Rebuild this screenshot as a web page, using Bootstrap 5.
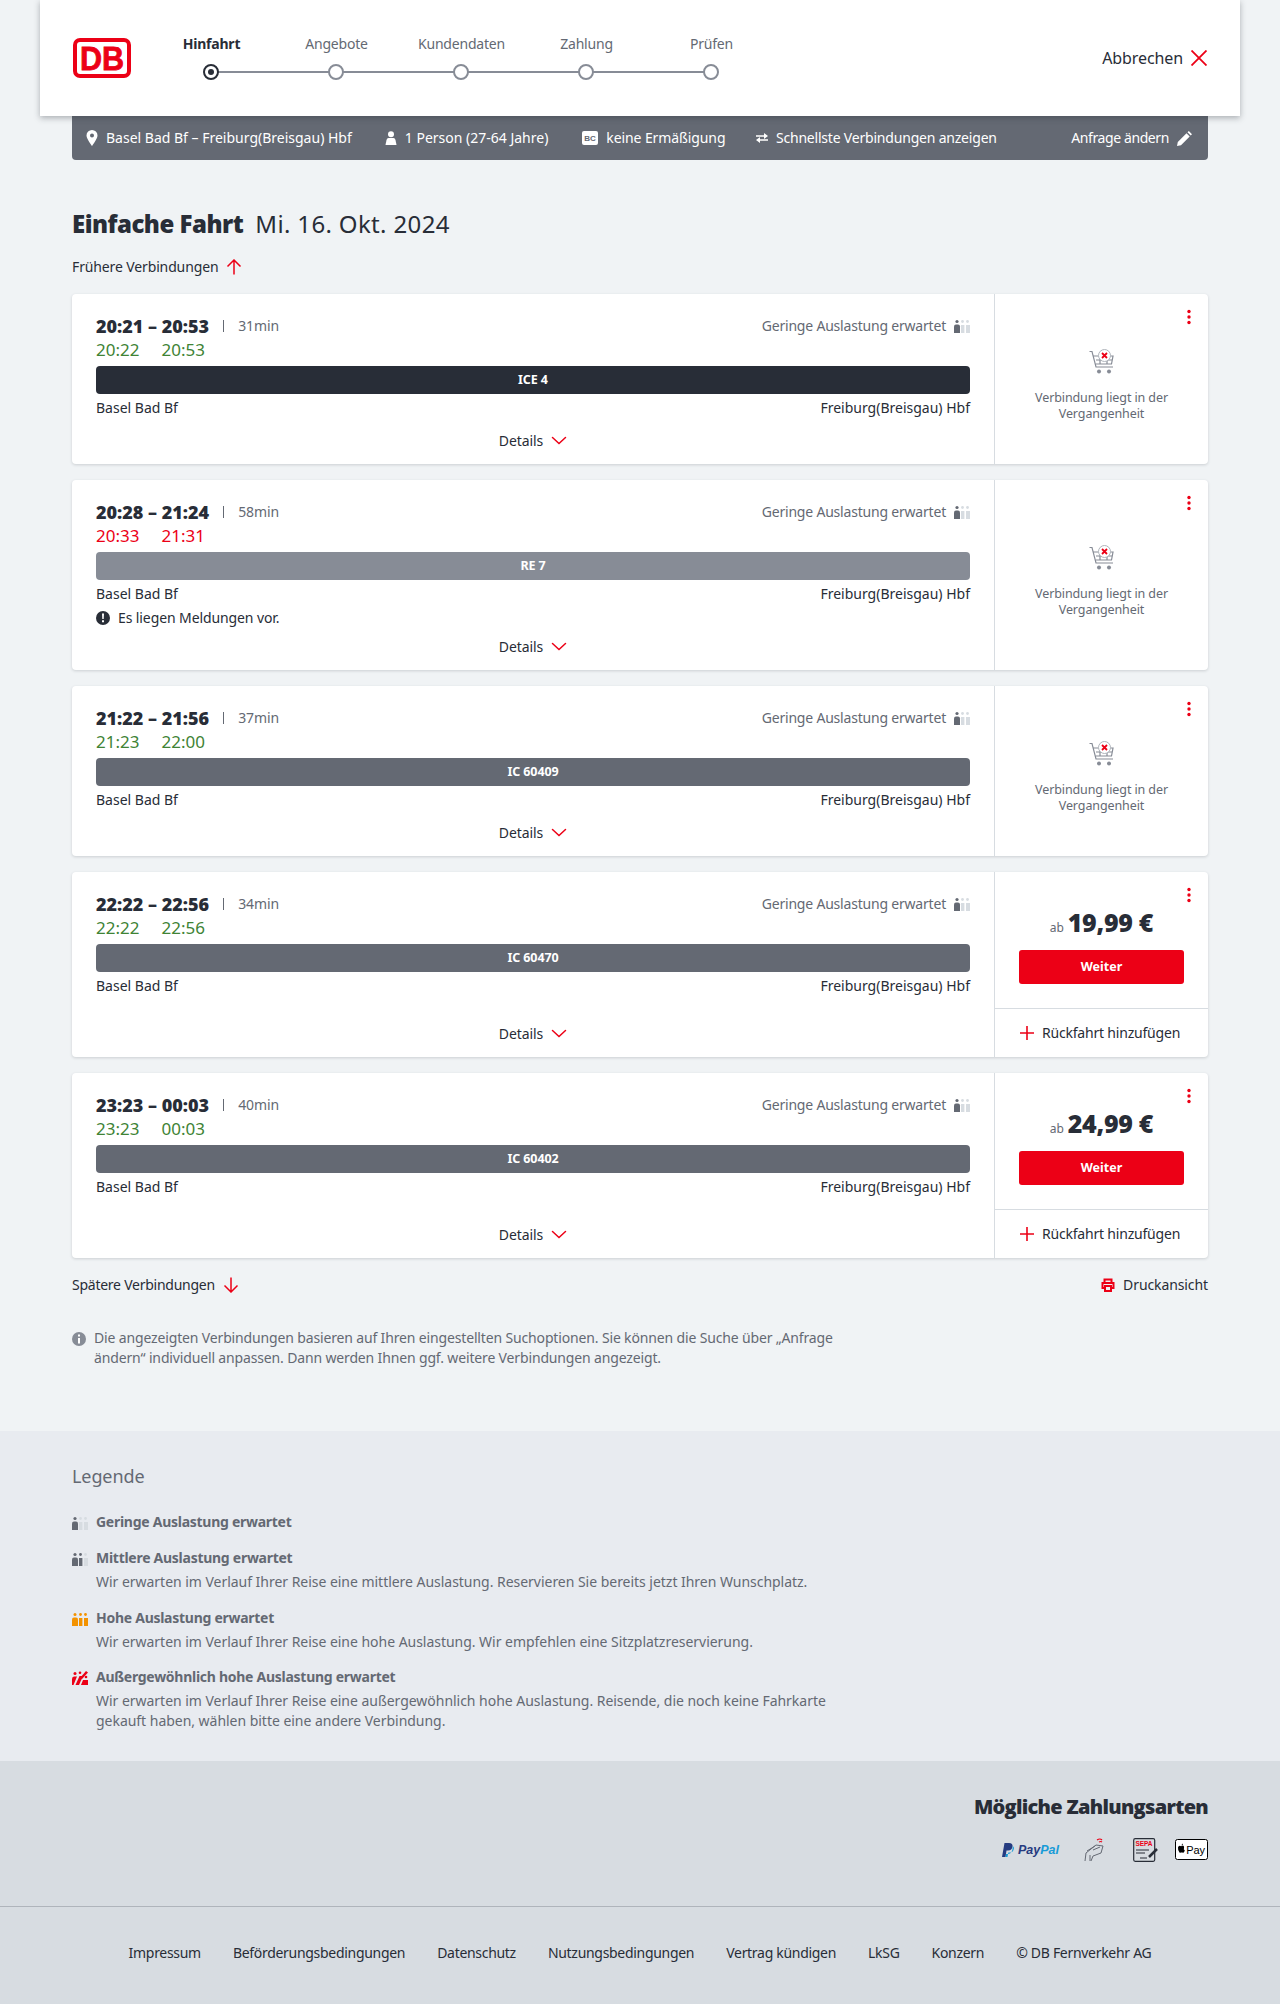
<!DOCTYPE html>
<html lang="de">
<head>
<meta charset="utf-8">
<title>Verbindungen</title>
<link rel="stylesheet" href="https://cdn.jsdelivr.net/npm/bootstrap@5.3.0/dist/css/bootstrap.min.css">
<style>
body{background:#f0f3f5;color:#282d37;font-family:"Noto Sans","Liberation Sans",sans-serif;font-size:14px;line-height:20px;letter-spacing:-.1px}
.svg-defs{position:absolute;width:0;height:0}
.wrap-main{width:1136px;margin:0 auto}
.top-head{width:1200px;height:116px;margin:0 auto;background:#fff;box-shadow:0 2px 6px rgba(40,45,55,.35);padding:0 33px;position:relative;z-index:2}
.stepper{width:625px;margin-left:18px}
.step{width:125px;text-align:center;color:#646973;position:relative;padding-top:12px;height:72px;letter-spacing:-.2px}
.step.on{color:#282d37;font-weight:700}
.step i{position:absolute;left:54px;top:42px;width:16px;height:16px;border-radius:50%;border:2px solid #878c96;background:#fff;z-index:1}
.step.on i{border-color:#282d37}
.step.on i::after{content:"";position:absolute;left:3px;top:3px;width:6px;height:6px;border-radius:50%;background:#282d37}
.step:not(:last-child)::after{content:"";position:absolute;left:62px;top:49px;width:125px;height:2px;background:#878c96}
.cancel{font-size:16px}
.logo-txt{font-family:"Liberation Sans",sans-serif;font-weight:700;font-size:34px;fill:#ec0016;stroke:#ec0016;stroke-width:.8px}
.sumbar{height:44px;background:#646973;color:#fff;border-radius:0 0 4px 4px;padding:0 16px 0 14px;font-size:14px;letter-spacing:0}
.sum-a{margin-right:33px}
.sum-b{margin-right:34px}
.sum-c{margin-right:30.5px;letter-spacing:-.1px}
.sum-d{letter-spacing:-.2px}
.sum-e{letter-spacing:-.4px}
.head-font{font-family:"Open Sans","Noto Sans",sans-serif;font-weight:800}
.title-line{margin-top:49px;height:30px;font-size:24px;line-height:30px;letter-spacing:.35px}
.title-line b{margin-right:12px;letter-spacing:-.5px}
.page-link-row{height:20px;margin-top:18px;margin-bottom:17px;letter-spacing:-.13px}
.conn{height:170px;margin-bottom:16px;border:0;border-radius:4px;box-shadow:0 1px 3px rgba(40,45,55,.18);overflow:hidden}
.conn.tall{height:190px}
.conn.buy{height:185px}
.conn-main{flex:1 1 auto;padding:20px 24px 0;min-width:0}
.conn-side{width:214px;flex:none;border-left:1px solid #d7dce1;position:relative;color:#646973;font-size:12.5px;line-height:16px;text-align:center}
.kebab{position:absolute;right:16px;top:15px}
.line-a{height:24px}
.time-big{font-size:18px;line-height:24px;letter-spacing:0}
.dur{color:#646973}
.dur::before{content:"";display:inline-block;width:1px;height:12px;background:#646973;margin:0 14px;vertical-align:-1px}
.load{color:#646973;letter-spacing:-.2px}
.line-b{height:24px;font-size:17px;line-height:24px;margin-bottom:4px;letter-spacing:0}
.ok{color:#408335}
.bad{color:#ec0016}
.gap-t{display:inline-block;margin-right:22px}
.trainbar{height:28px;border-radius:4px;color:#fff;font-weight:700;font-size:12.5px;text-align:center;line-height:28px}
.tb-ice{background:#282d37}
.tb-re{background:#878c96}
.tb-ic{background:#646973}
.line-c{margin-top:4px;height:20px;line-height:20px;letter-spacing:0}
.line-d{margin-top:2px;height:24px;line-height:24px}
.det{height:20px;margin-top:13px}
.conn.tall .det{margin-top:7px}
.conn.buy .det{margin-top:28px}
.past-box{padding-top:13px}
.past-box p{margin:15px auto 0;width:150px}
.price-box{height:136px;padding-top:34px}
.ab{font-size:12px;margin-right:4px}
.price{font-size:25px;color:#282d37;line-height:32px;letter-spacing:-.3px}
.go-btn{width:165px;height:34px;background:#ec0016;color:#fff;border:0;border-radius:3px;font-size:12.5px;font-weight:700;padding:0;margin-top:12px;line-height:34px}
.go-btn:hover{background:#c50014;color:#fff}
.back-row{border-top:1px solid #d7dce1;height:49px;color:#282d37;font-size:14px;padding-left:25px;letter-spacing:-.2px}
.later-row{margin-top:17px;height:20px}
.later-txt{letter-spacing:-.25px}
.info-row{color:#646973;width:790px;margin-top:33px;line-height:20px;height:40px;letter-spacing:-.15px}
.legend{margin-top:63px;background:#e8ebf0;height:330px;color:#646973;padding-top:33px}
.leg-title{font-size:18px;line-height:24px;height:24px;margin-bottom:24px}
.leg-row{margin-bottom:16px}
.leg-row.leg-tight{margin-bottom:15px}
.leg-row h3{font-size:14px;font-weight:700;line-height:20px;margin:0;color:#646973;letter-spacing:-.27px}
.leg-row p{margin:4px 0 0;width:760px;line-height:20px;letter-spacing:-.03px}
.leg-ic{width:24px;flex:none;padding-top:3px}
.pay{background:#d7dce1;height:146px;border-bottom:1px solid #afb4bb;padding-top:33px}
.pay h2{font-size:20px;line-height:26px;margin:0 0 17px;text-align:right;letter-spacing:-.7px}
.paytxt{font-family:"Liberation Sans",sans-serif;font-weight:700;font-style:italic;font-size:12.5px;color:#253b80;letter-spacing:0}
.paytxt em{color:#179bd7}
.hand-ic{margin-left:24px}
.sepa-ic{margin-left:28px}
.sepa{font-size:6.5px;font-weight:700;fill:#ec0016;font-family:"Liberation Sans",sans-serif}
.apay{font-size:11px;font-family:"Liberation Sans",sans-serif;fill:#000}
.foot{background:#d7dce1;height:97px;gap:32px;color:#282d37;padding-bottom:5px;letter-spacing:-.3px}
</style>
</head>
<body>
<svg class="svg-defs" aria-hidden="true">
<symbol id="i-load" viewBox="0 0 16 16">
<g fill="#646973"><circle cx="3" cy="3.500" r="1.600"/><path d="M0 8.500q0-2 2-2h2q2 0 2 2V15H0z"/></g>
<g fill="#d7dce1"><circle cx="8.500" cy="3.500" r="1.400"/><path d="M7 7h3.400v8H7z"/><circle cx="13.500" cy="3.500" r="1.400"/><path d="M12 7h4v8h-4z"/></g>
</symbol>
<symbol id="i-load2" viewBox="0 0 16 16">
<g fill="#646973"><circle cx="3" cy="3.500" r="1.600"/><path d="M0 8.500q0-2 2-2h2q2 0 2 2V15H0z"/><circle cx="8.500" cy="3.500" r="1.400"/><path d="M7 7h3.400v8H7z"/></g>
<g fill="#d7dce1"><circle cx="13.500" cy="3.500" r="1.400"/><path d="M12 7h4v8h-4z"/></g>
</symbol>
<symbol id="i-load3" viewBox="0 0 16 16">
<g fill="#f39200"><circle cx="3" cy="3.500" r="1.500"/><path d="M0 8.500q0-2 2-2h2q2 0 2 2V15H0z"/><circle cx="8.500" cy="3.500" r="1.400"/><path d="M7 7h3.400v8H7z"/><circle cx="13.500" cy="3.500" r="1.400"/><path d="M12 7h4v8h-4z"/></g>
</symbol>
<symbol id="i-load4" viewBox="0 0 16 16">
<g fill="#ec0016"><circle cx="3" cy="3.500" r="1.500"/><path d="M0 9q0-2.500 2-2.500h3L1.500 15H0z"/><path d="M3.500 15l4-9h3.500l-4 9z"/><path d="M9 15l2-5h5v5z"/><path d="M8 8l6-7 2 1.500L10 9z"/><circle cx="14" cy="7" r="1.300"/><circle cx="8" cy="2.800" r="1.300"/></g>
</symbol>
<symbol id="i-kebab" viewBox="0 0 6 16"><g fill="#ec0016"><circle cx="3" cy="2.500" r="1.700"/><circle cx="3" cy="8" r="1.700"/><circle cx="3" cy="13.500" r="1.700"/></g></symbol>
<symbol id="i-chev" viewBox="0 0 16 10"><path d="M1.500 1.500 8 7.500l6.500-6" fill="none" stroke="#ec0016" stroke-width="1.500" stroke-linecap="round"/></symbol>
<symbol id="i-plus" viewBox="0 0 14 14"><path d="M7 0v14M0 7h14" stroke="#ec0016" stroke-width="1.600" fill="none"/></symbol>
<symbol id="i-cart" viewBox="0 0 26 26">
<g fill="none" stroke="#878c96" stroke-width="1.200"><path d="M0.500 2.500h2.500l4 15.500h17"/><path d="M4 7h20l-1.500 8H6.500"/><path d="M7 11h16M11 7v8M18 7v8"/></g>
<circle cx="10" cy="22.500" r="2" fill="#878c96"/><circle cx="20" cy="22.500" r="2" fill="#878c96"/>
<circle cx="15.500" cy="6.500" r="6" fill="#fff" stroke="#afb4bb"/>
<path d="M13 4l5 5M18 4l-5 5" stroke="#ec0016" stroke-width="1.800"/>
</symbol>
</svg>

<header class="top-head d-flex align-items-center">
<svg width="58" height="40" viewBox="0 0 58 40" role="img" aria-label="DB">
<rect x="2" y="2" width="54" height="36" rx="5" fill="#fff" stroke="#ec0016" stroke-width="4"/>
<text x="7" y="32" class="logo-txt" textLength="44" lengthAdjust="spacingAndGlyphs">DB</text>
</svg>
<div class="stepper d-flex">
<div class="step on">Hinfahrt<i></i></div>
<div class="step">Angebote<i></i></div>
<div class="step">Kundendaten<i></i></div>
<div class="step">Zahlung<i></i></div>
<div class="step">Prüfen<i></i></div>
</div>
<div class="cancel ms-auto d-flex align-items-center gap-2">Abbrechen
<svg width="16" height="16" viewBox="0 0 16 16"><path d="M.5.500l15 15M15.500.500l-15 15" stroke="#ec0016" stroke-width="1.800" fill="none"/></svg></div>
</header>

<main class="wrap-main">
<div class="sumbar d-flex align-items-center">
<div class="sum-a d-flex align-items-center gap-2"><svg width="12" height="16" viewBox="0 0 12 16"><path fill="#fff" fill-rule="evenodd" d="M6 0a5.500 5.500 0 0 1 5.500 5.500C11.500 9 6 16 6 16S.5 9 .5 5.500A5.500 5.500 0 0 1 6 0zm0 3.500a2 2 0 1 0 0 4 2 2 0 0 0 0-4z"/></svg>Basel Bad Bf – Freiburg(Breisgau) Hbf</div>
<div class="sum-b d-flex align-items-center gap-2"><svg width="12" height="14" viewBox="0 0 12 14"><circle cx="6" cy="3.200" r="3" fill="#fff"/><path fill="#fff" d="M3.500 7h5q1.500 0 2 2l1 5H.5l1-5q.5-2 2-2z"/></svg>1 Person (27-64 Jahre)</div>
<div class="sum-c d-flex align-items-center gap-2"><svg width="16" height="14" viewBox="0 0 16 14"><path fill="#fff" d="M2 0h12q2 0 2 2v10q0 2-2 2H2q-2 0-2-2V2q0-2 2-2z"/><text x="8" y="10" text-anchor="middle" font-size="8" font-weight="700" fill="#646973" font-family="Liberation Sans,sans-serif">BC</text></svg>keine Ermäßigung</div>
<div class="sum-d d-flex align-items-center gap-2"><svg width="12" height="10" viewBox="0 0 12 10"><path d="M0 3h10M2 7h10" stroke="#fff" stroke-width="1.600"/><path fill="#fff" d="M8 0l4 3-4 3zM4 4L0 7l4 3z"/></svg>Schnellste Verbindungen anzeigen</div>
<div class="sum-e ms-auto d-flex align-items-center gap-2">Anfrage ändern <svg width="15" height="15" viewBox="0 0 15 15"><path fill="#fff" d="M0 15l.8-4L9.500 2.300l3.200 3.200L4 14.200zM10.500 1.300 11.800 0 15 3.200l-1.300 1.300z"/></svg></div>
</div>

<h1 class="title-line fw-normal mb-0"><b class="head-font">Einfache Fahrt</b>Mi. 16. Okt. 2024</h1>
<div class="page-link-row d-flex align-items-center gap-2">Frühere Verbindungen <svg width="16" height="16" viewBox="0 0 16 16"><path d="M8 15.500V1M1.500 7.500 8 1l6.500 6.500" fill="none" stroke="#ec0016" stroke-width="1.500"/></svg></div>

<!-- 1 -->
<article class="card conn flex-row">
<div class="conn-main">
<div class="line-a d-flex align-items-center"><span class="time-big head-font">20:21 – 20:53</span><span class="dur">31min</span>
<span class="load ms-auto d-flex align-items-center gap-2">Geringe Auslastung erwartet <svg width="16" height="16"><use href="#i-load"/></svg></span></div>
<div class="line-b ok"><span class="gap-t">20:22</span>20:53</div>
<div class="trainbar tb-ice">ICE 4</div>
<div class="line-c d-flex justify-content-between"><span>Basel Bad Bf</span><span>Freiburg(Breisgau) Hbf</span></div>
<div class="det d-flex align-items-center justify-content-center gap-2">Details <svg width="16" height="10"><use href="#i-chev"/></svg></div>
</div>
<div class="conn-side past-box d-flex flex-column justify-content-center align-items-center"><svg class="kebab" width="6" height="16"><use href="#i-kebab"/></svg><svg width="26" height="26"><use href="#i-cart"/></svg><p>Verbindung liegt in der Vergangenheit</p></div>
</article>
<!-- 2 -->
<article class="card conn tall flex-row">
<div class="conn-main">
<div class="line-a d-flex align-items-center"><span class="time-big head-font">20:28 – 21:24</span><span class="dur">58min</span>
<span class="load ms-auto d-flex align-items-center gap-2">Geringe Auslastung erwartet <svg width="16" height="16"><use href="#i-load"/></svg></span></div>
<div class="line-b bad"><span class="gap-t">20:33</span>21:31</div>
<div class="trainbar tb-re">RE 7</div>
<div class="line-c d-flex justify-content-between"><span>Basel Bad Bf</span><span>Freiburg(Breisgau) Hbf</span></div>
<div class="line-d d-flex align-items-center gap-2"><svg width="14" height="14" viewBox="0 0 14 14"><circle cx="7" cy="7" r="7" fill="#282d37"/><path d="M6 2.500h2l-.3 5.500H6.300zM6 9.300h2v2H6z" fill="#fff"/></svg>Es liegen Meldungen vor.</div>
<div class="det d-flex align-items-center justify-content-center gap-2">Details <svg width="16" height="10"><use href="#i-chev"/></svg></div>
</div>
<div class="conn-side past-box d-flex flex-column justify-content-center align-items-center"><svg class="kebab" width="6" height="16"><use href="#i-kebab"/></svg><svg width="26" height="26"><use href="#i-cart"/></svg><p>Verbindung liegt in der Vergangenheit</p></div>
</article>
<!-- 3 -->
<article class="card conn flex-row">
<div class="conn-main">
<div class="line-a d-flex align-items-center"><span class="time-big head-font">21:22 – 21:56</span><span class="dur">37min</span>
<span class="load ms-auto d-flex align-items-center gap-2">Geringe Auslastung erwartet <svg width="16" height="16"><use href="#i-load"/></svg></span></div>
<div class="line-b ok"><span class="gap-t">21:23</span>22:00</div>
<div class="trainbar tb-ic">IC 60409</div>
<div class="line-c d-flex justify-content-between"><span>Basel Bad Bf</span><span>Freiburg(Breisgau) Hbf</span></div>
<div class="det d-flex align-items-center justify-content-center gap-2">Details <svg width="16" height="10"><use href="#i-chev"/></svg></div>
</div>
<div class="conn-side past-box d-flex flex-column justify-content-center align-items-center"><svg class="kebab" width="6" height="16"><use href="#i-kebab"/></svg><svg width="26" height="26"><use href="#i-cart"/></svg><p>Verbindung liegt in der Vergangenheit</p></div>
</article>
<!-- 4 -->
<article class="card conn buy flex-row">
<div class="conn-main">
<div class="line-a d-flex align-items-center"><span class="time-big head-font">22:22 – 22:56</span><span class="dur">34min</span>
<span class="load ms-auto d-flex align-items-center gap-2">Geringe Auslastung erwartet <svg width="16" height="16"><use href="#i-load"/></svg></span></div>
<div class="line-b ok"><span class="gap-t">22:22</span>22:56</div>
<div class="trainbar tb-ic">IC 60470</div>
<div class="line-c d-flex justify-content-between"><span>Basel Bad Bf</span><span>Freiburg(Breisgau) Hbf</span></div>
<div class="det d-flex align-items-center justify-content-center gap-2">Details <svg width="16" height="10"><use href="#i-chev"/></svg></div>
</div>
<div class="conn-side"><svg class="kebab" width="6" height="16"><use href="#i-kebab"/></svg>
<div class="price-box"><div><span class="ab">ab</span><span class="price head-font">19,99 €</span></div><button class="btn go-btn" type="button">Weiter</button></div>
<div class="back-row d-flex align-items-center gap-2"><svg width="14" height="14"><use href="#i-plus"/></svg>Rückfahrt hinzufügen</div>
</div>
</article>
<!-- 5 -->
<article class="card conn buy flex-row mb-0">
<div class="conn-main">
<div class="line-a d-flex align-items-center"><span class="time-big head-font">23:23 – 00:03</span><span class="dur">40min</span>
<span class="load ms-auto d-flex align-items-center gap-2">Geringe Auslastung erwartet <svg width="16" height="16"><use href="#i-load"/></svg></span></div>
<div class="line-b ok"><span class="gap-t">23:23</span>00:03</div>
<div class="trainbar tb-ic">IC 60402</div>
<div class="line-c d-flex justify-content-between"><span>Basel Bad Bf</span><span>Freiburg(Breisgau) Hbf</span></div>
<div class="det d-flex align-items-center justify-content-center gap-2">Details <svg width="16" height="10"><use href="#i-chev"/></svg></div>
</div>
<div class="conn-side"><svg class="kebab" width="6" height="16"><use href="#i-kebab"/></svg>
<div class="price-box"><div><span class="ab">ab</span><span class="price head-font">24,99 €</span></div><button class="btn go-btn" type="button">Weiter</button></div>
<div class="back-row d-flex align-items-center gap-2"><svg width="14" height="14"><use href="#i-plus"/></svg>Rückfahrt hinzufügen</div>
</div>
</article>

<div class="later-row d-flex align-items-center justify-content-between">
<div class="later-txt d-flex align-items-center gap-2">Spätere Verbindungen <svg width="16" height="16" viewBox="0 0 16 16"><path d="M8 .5V15M1.500 8.500 8 15l6.500-6.500" fill="none" stroke="#ec0016" stroke-width="1.500"/></svg></div>
<div class="d-flex align-items-center gap-2"><svg width="14" height="14" viewBox="0 0 14 14"><path fill="none" stroke="#ec0016" stroke-width="2" d="M3.500 5V1.500h7V5M3 10H1.500V5h11v5H11M4 8h6v5H4z"/></svg>Druckansicht</div>
</div>

<div class="info-row d-flex gap-2"><svg class="flex-shrink-0 mt-1" width="14" height="14" viewBox="0 0 14 14"><circle cx="7" cy="7" r="7" fill="#878c96"/><path d="M6 6h2v5.500H6zM6 2.500h2v2H6z" fill="#fff"/></svg><div>Die angezeigten Verbindungen basieren auf Ihren eingestellten Suchoptionen. Sie können die Suche über „Anfrage ändern“ individuell anpassen. Dann werden Ihnen ggf. weitere Verbindungen angezeigt.</div></div>
</main>

<section class="legend">
<div class="wrap-main">
<div class="leg-title">Legende</div>
<div class="leg-row d-flex"><div class="leg-ic"><svg class="d-block" width="16" height="16"><use href="#i-load"/></svg></div><div><h3>Geringe Auslastung erwartet</h3></div></div>
<div class="leg-row d-flex"><div class="leg-ic"><svg class="d-block" width="16" height="16"><use href="#i-load2"/></svg></div><div><h3>Mittlere Auslastung erwartet</h3><p>Wir erwarten im Verlauf Ihrer Reise eine mittlere Auslastung. Reservieren Sie bereits jetzt Ihren Wunschplatz.</p></div></div>
<div class="leg-row leg-tight d-flex"><div class="leg-ic"><svg class="d-block" width="16" height="16"><use href="#i-load3"/></svg></div><div><h3>Hohe Auslastung erwartet</h3><p>Wir erwarten im Verlauf Ihrer Reise eine hohe Auslastung. Wir empfehlen eine Sitzplatzreservierung.</p></div></div>
<div class="leg-row d-flex"><div class="leg-ic"><svg class="d-block" width="16" height="16"><use href="#i-load4"/></svg></div><div><h3>Außergewöhnlich hohe Auslastung erwartet</h3><p>Wir erwarten im Verlauf Ihrer Reise eine außergewöhnlich hohe Auslastung. Reisende, die noch keine Fahrkarte gekauft haben, wählen bitte eine andere Verbindung.</p></div></div>
</div>
</section>

<section class="pay">
<div class="wrap-main">
<h2 class="head-font">Mögliche Zahlungsarten</h2>
<div class="d-flex justify-content-end align-items-center">
<div class="d-flex align-items-center gap-1"><svg width="12" height="14" viewBox="0 0 12 14"><path fill="#253b80" d="M2.500 0h4.500q4 0 3.500 3.500Q10 7.500 6 7.500H4.500L3.500 14H0z"/><path fill="#179bd7" d="M10.800 3q1.500 1 1 3-.7 3.500-4 3.500H6.300L5.500 14H3.500l.5-3h1.500q4 0 5-4.500z"/></svg><span class="paytxt">Pay<em>Pal</em></span></div>
<svg class="hand-ic" width="22" height="25" viewBox="0 0 22 25" fill="none" stroke="#646973" stroke-width="1"><path d="M2 24l1-8 10-8 7 1-2 7-8 3-2 5"/><path d="M4 14l8-5M7 18v6M10 13l7-3"/><path d="M14 3q3-2 5 0M16 5q2-1 3 0" stroke="#ec0016" stroke-width="1.200"/></svg>
<svg class="sepa-ic" width="26" height="24" viewBox="0 0 26 24" fill="none"><rect x=".7" y=".7" width="21" height="22.600" rx="1.500" stroke="#282d37" stroke-width="1.200"/><text x="11" y="8" text-anchor="middle" class="sepa">SEPA</text><path d="M3 12h13M3 15h9M7 20h7" stroke="#282d37"/><path d="M16 19l8-8" stroke="#282d37" stroke-width="2.500"/></svg>
<svg class="ms-3" width="33" height="21" viewBox="0 0 33 21"><rect x=".5" y=".5" width="32" height="20" rx="2" fill="#fff" stroke="#000"/><path d="M8.800 7q-1.300-.8-2.200 0-.6.300-1.100 0-2-.6-2.500 1.500-.3 3 1.500 5 .6.500 1.300.1.800-.3 1.500 0 .8.400 1.400-.2.800-.8 1.100-1.900-1.700-1-.7-2.800zM6.600 6.600Q6.500 5 8 4.500 8.200 6.200 6.600 6.600z" fill="#000"/><text x="20.500" y="14.500" text-anchor="middle" class="apay">Pay</text></svg>
</div>
</div>
</section>

<footer class="foot d-flex align-items-center justify-content-center">
<span>Impressum</span><span>Beförderungsbedingungen</span><span>Datenschutz</span><span>Nutzungsbedingungen</span><span>Vertrag kündigen</span><span>LkSG</span><span>Konzern</span><span>© DB Fernverkehr AG</span>
</footer>
</body>
</html>
